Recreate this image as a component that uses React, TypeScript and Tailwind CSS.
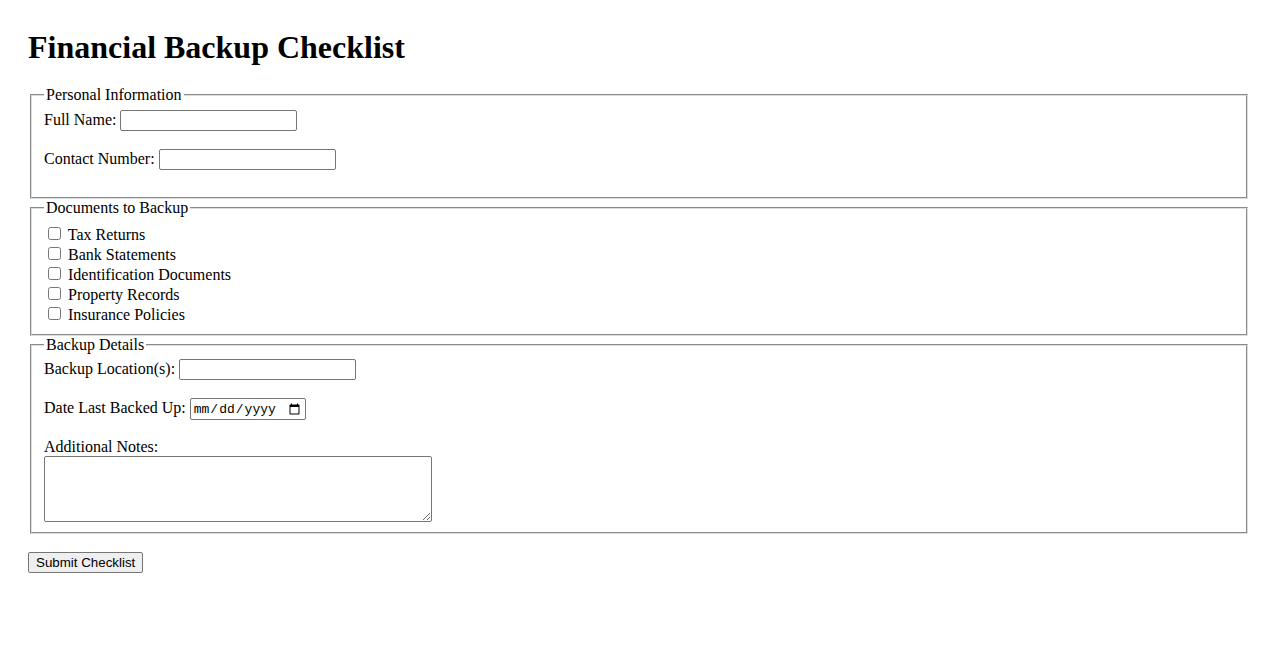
import { useState } from 'react'

const docs = [
  'Tax Returns',
  'Bank Statements',
  'Identification Documents',
  'Property Records',
  'Insurance Policies',
]

const inputCls =
  "h-[21px] w-[177px] rounded-[2px] border border-[#767676] bg-white px-[2px] align-baseline text-[13.33px] font-['Liberation_Sans',Arial,sans-serif]"

const fieldsetCls =
  'mx-[2px] border-2 border-[#dedede] [border-style:groove] px-[12px] pt-[5.6px] pb-[10px]'

export default function App() {
  const [checked, setChecked] = useState<Record<string, boolean>>({})

  return (
    <div className="min-h-screen bg-white px-[28px] pt-[29px] text-[16px] leading-[normal] text-black font-['Liberation_Serif','Times_New_Roman',serif]">
      <h1 className="mb-[20.4px] text-[32px] font-bold leading-[normal]">Financial Backup Checklist</h1>

      <form onSubmit={(e) => e.preventDefault()}>
        <fieldset className={fieldsetCls}>
          <legend className="px-[2px]">Personal Information</legend>
          <div className="mb-[18px]">
            <label htmlFor="fullName">Full Name:</label> <input id="fullName" type="text" className={inputCls} />
          </div>
          <div className="mb-[17px]">
            <label htmlFor="contact">Contact Number:</label> <input id="contact" type="tel" className={inputCls} />
          </div>
        </fieldset>

        <fieldset className={fieldsetCls}>
          <legend className="px-[2px]">Documents to Backup</legend>
          <div className="pt-[1px]">
            {docs.map((d) => (
              <div key={d}>
                <input
                  type="checkbox"
                  id={d}
                  checked={!!checked[d]}
                  onChange={() => setChecked({ ...checked, [d]: !checked[d] })}
                  className="my-[3px] ml-[4px] mr-[3px] h-[13px] w-[13px] align-baseline"
                />{' '}
                <label htmlFor={d}>{d}</label>
              </div>
            ))}
          </div>
        </fieldset>

        <fieldset className={fieldsetCls}>
          <legend className="px-[2px]">Backup Details</legend>
          <div className="mb-[18px]">
            <label htmlFor="location">Backup Location(s):</label> <input id="location" type="text" className={inputCls} />
          </div>
          <div className="mb-[18px]">
            <label htmlFor="lastDate">Date Last Backed Up:</label>{' '}
            <input
              id="lastDate"
              type="date"
              className="h-[22px] w-[116px] rounded-[2px] border border-[#767676] bg-white px-[2px] align-baseline text-[13px] font-['Liberation_Mono',monospace]"
            />
          </div>
          <div>
            <label htmlFor="notes">Additional Notes:</label>
            <textarea
              id="notes"
              className="block h-[66px] w-[388px] resize rounded-[2px] border border-[#767676] bg-white p-[2px] text-[13.33px] font-['Liberation_Mono',monospace]"
            />
          </div>
        </fieldset>

        <button
          type="submit"
          className="mt-[18px] h-[21px] rounded-[2px] border border-[#767676] bg-[#efefef] px-[7px] text-[13.33px] leading-[normal] font-['Liberation_Sans',Arial,sans-serif]"
        >
          Submit Checklist
        </button>
      </form>
    </div>
  )
}
